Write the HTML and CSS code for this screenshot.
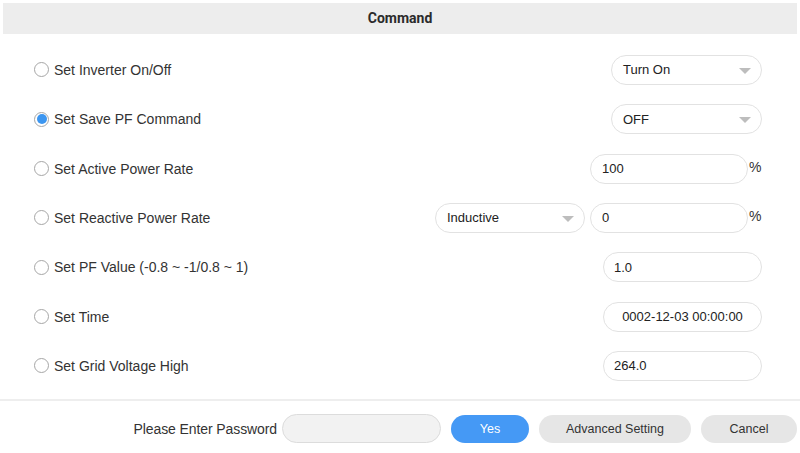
FILE: index.html
```html
<!DOCTYPE html>
<html>
<head>
<meta charset="utf-8">
<link rel="stylesheet" href="styles.css">
</head>
<body>
<div class="dialog">
  <div class="header">Command</div>
  <div class="rows">
    <div class="row">
      <label class="opt"><span class="radio"></span>Set Inverter On/Off</label>
      <div class="ctrls"><div class="select w151">Turn On<span class="caret"></span></div></div>
    </div>
    <div class="row">
      <label class="opt"><span class="radio checked"></span>Set Save PF Command</label>
      <div class="ctrls"><div class="select w151">OFF<span class="caret"></span></div></div>
    </div>
    <div class="row">
      <label class="opt"><span class="radio"></span>Set Active Power Rate</label>
      <div class="ctrls"><div class="input w158">100</div><span class="pct">%</span></div>
    </div>
    <div class="row">
      <label class="opt"><span class="radio"></span>Set Reactive Power Rate</label>
      <div class="ctrls"><div class="select w150">Inductive<span class="caret"></span></div><div class="input w158 ml5">0</div><span class="pct">%</span></div>
    </div>
    <div class="row">
      <label class="opt"><span class="radio"></span>Set PF Value (-0.8 ~ -1/0.8 ~ 1)</label>
      <div class="ctrls"><div class="input w159 pl10">1.0</div></div>
    </div>
    <div class="row">
      <label class="opt"><span class="radio"></span>Set Time</label>
      <div class="ctrls"><div class="input w159 center">0002-12-03 00:00:00</div></div>
    </div>
    <div class="row">
      <label class="opt"><span class="radio"></span>Set Grid Voltage High</label>
      <div class="ctrls"><div class="input w159 pl10">264.0</div></div>
    </div>
  </div>
  <div class="footer">
    <span class="pw-label">Please Enter Password</span>
    <div class="pw-input"></div>
    <button class="btn primary">Yes</button>
    <button class="btn adv">Advanced Setting</button>
    <button class="btn cancel">Cancel</button>
  </div>
</div>
</body>
</html>
```
FILE: styles.css
```css
* { box-sizing: border-box; }
html, body { margin: 0; padding: 0; background: #fff; }
body {
  width: 800px;
  height: 453px;
  overflow: hidden;
  font-family: "Liberation Sans", Arial, sans-serif;
  color: #333;
}
.dialog { padding: 3px 3px 0 3px; }
.header {
  height: 31px;
  background: #ededed;
  text-align: center;
  font-family: Roboto, "Liberation Sans", sans-serif;
  font-weight: 700;
  font-size: 14px;
  line-height: 31px;
  color: #2b2b2b;
}
.rows { padding-top: 11.3px; }
.row {
  height: 49.33px;
  display: flex;
  align-items: center;
  justify-content: space-between;
  padding: 0 35px 0 31px;
}
.opt {
  display: flex;
  align-items: center;
  font-size: 14px;
  color: #333;
}
.radio {
  width: 15px;
  height: 15px;
  border: 1px solid #a6a6a6;
  border-radius: 50%;
  margin-right: 5px;
  background: #fff;
  position: relative;
}
.radio.checked::after {
  content: "";
  position: absolute;
  left: 1.5px;
  top: 1.5px;
  width: 10px;
  height: 10px;
  border-radius: 50%;
  background: #3c96f0;
}
.ctrls { display: flex; align-items: center; }
.select, .input {
  height: 30px;
  border: 1px solid #e2e2e2;
  border-radius: 15px;
  font-size: 13px;
  color: #222;
  display: flex;
  align-items: center;
  padding-left: 11px;
  background: #fff;
  position: relative;
}
.w151 { width: 151px; }
.w150 { width: 150px; }
.w158 { width: 158px; }
.w159 { width: 159px; }
.ml5 { margin-left: 5px; }
.pl10 { padding-left: 10px; }
.center { justify-content: center; padding-left: 0; }
.caret {
  position: absolute;
  right: 10px;
  top: 12px;
  width: 0;
  height: 0;
  border-left: 6px solid transparent;
  border-right: 6px solid transparent;
  border-top: 6px solid #bdbdbd;
}
.pct {
  font-size: 14px;
  color: #333;
  margin-left: 1px;
  align-self: flex-start;
  margin-top: 5px;
  width: 13px;
}
.footer {
  margin: 8.5px -3px 0 -3px;
  border-top: 2px solid #eeeeee;
  height: 53px;
  display: flex;
  align-items: center;
  justify-content: flex-end;
  padding: 4px 3px 0 0;
}
.pw-label { font-size: 14px; color: #333; margin-right: 5px; letter-spacing: -0.1px; }
.pw-input {
  width: 159px;
  height: 29px;
  border: 1px solid #dcdcdc;
  border-radius: 15px;
  background: #f2f2f2;
  margin-right: 10px;
}
.btn {
  height: 28px;
  border: none;
  border-radius: 14px;
  font-family: "Liberation Sans", Arial, sans-serif;
  font-size: 12.5px;
  color: #333;
  background: #e6e6e6;
  padding: 0;
  margin-left: 10px;
}
.btn.primary { width: 78px; background: #4599f5; color: #fff; margin-left: 0; }
.btn.adv { width: 152px; }
.btn.cancel { width: 96px; margin-left: 10px; }
```
